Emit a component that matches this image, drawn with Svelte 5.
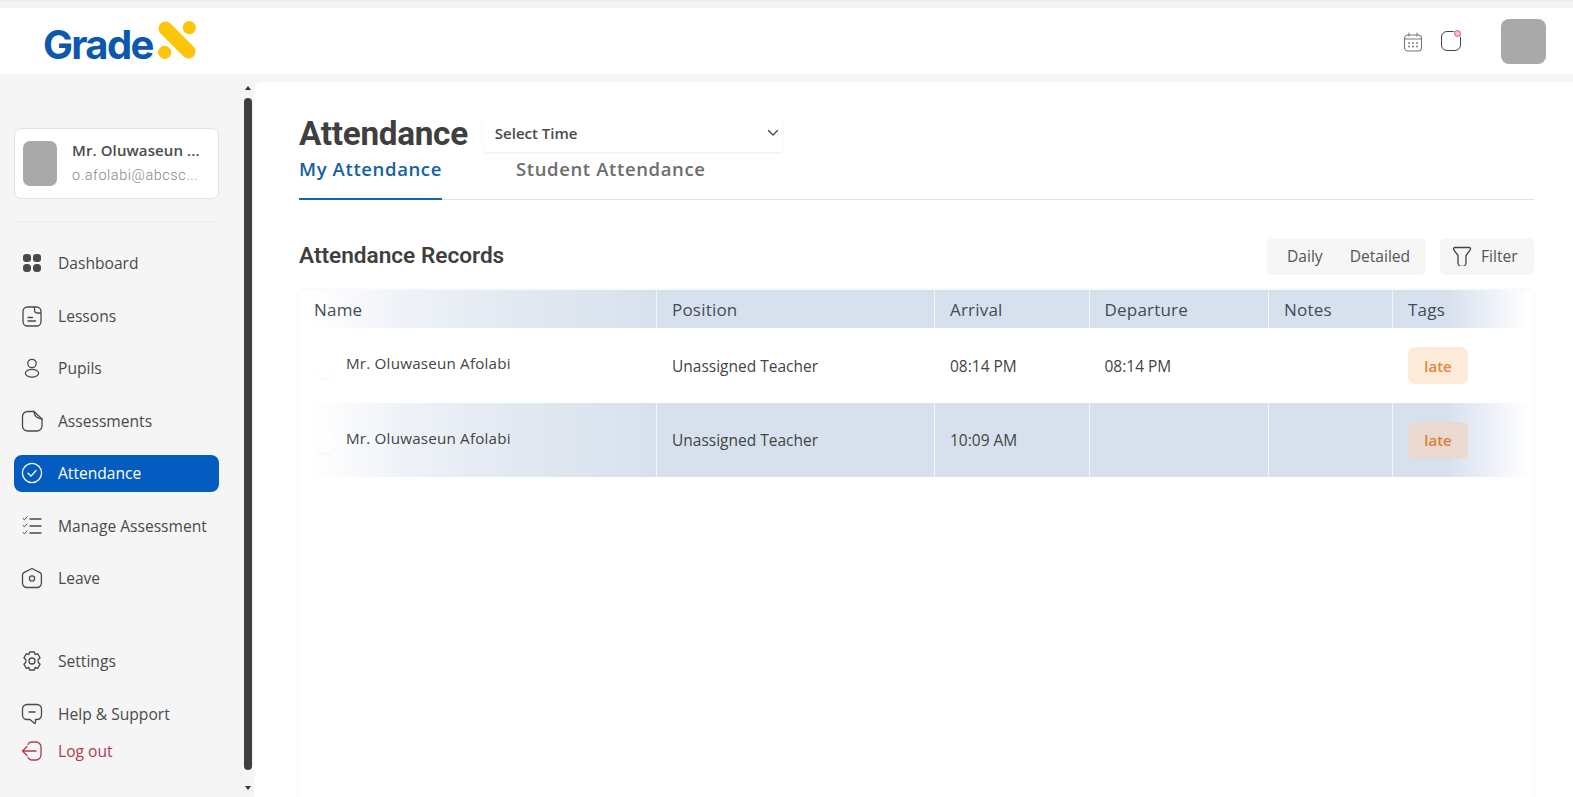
<script>
  const navTop = [
    { label: 'Dashboard', icon: 'dash' },
    { label: 'Lessons', icon: 'lessons' },
    { label: 'Pupils', icon: 'pupils' },
    { label: 'Assessments', icon: 'assess' },
    { label: 'Attendance', icon: 'check', active: true },
    { label: 'Manage Assessment', icon: 'manage' },
    { label: 'Leave', icon: 'leave' }
  ];
  const rows = [
    { arrival: '08:14 PM', departure: '08:14 PM', alt: false },
    { arrival: '10:09 AM', departure: '', alt: true }
  ];
</script>

{#snippet icon(name)}
  <svg class="ico" viewBox="0 0 22 22" fill="none" stroke="currentColor" stroke-width="1.3" stroke-linecap="round" stroke-linejoin="round">
    {#if name === 'dash'}
      <rect x="2" y="2" width="8" height="8" rx="3" fill="currentColor" stroke="none" />
      <rect x="12" y="2" width="8" height="8" rx="3" fill="currentColor" stroke="none" />
      <rect x="2" y="12" width="8" height="8" rx="3.5" fill="currentColor" stroke="none" />
      <rect x="12" y="12" width="8" height="8" rx="3.5" fill="currentColor" stroke="none" />
    {:else if name === 'lessons'}
      <rect x="2" y="2" width="18" height="19" rx="4.5" />
      <path d="M13.500 2.500v2.500a3 3 0 0 0 3 3h3M7 12.500h4.500M7 16h7.500" />
    {:else if name === 'pupils'}
      <circle cx="11" cy="6.5" r="4.2" />
      <ellipse cx="11" cy="16.3" rx="6.6" ry="3.9" />
    {:else if name === 'assess'}
      <path d="M13 1.5H6.5a5 5 0 0 0-5 5V16a5 5 0 0 0 5 5H16a5 5 0 0 0 5-5V9z" />
      <path d="M13 1.5c.2 4 3 7 8 7.5" />
    {:else if name === 'check'}
      <circle cx="11" cy="11" r="9.6" />
      <path d="M7 11.3l3 2.8 5-5.6" />
    {:else if name === 'manage'}
      <path d="M9 4h11M9 11h11M9 18h11" />
      <path d="M2 3.5l1.4 1.3L6 2M2 10.5l1.4 1.3L6 9M2 17.5l1.4 1.3L6 16" stroke-width="1" />
    {:else if name === 'leave'}
      <path d="M11 1.5l8 4.2a2.5 2.5 0 0 1 1.4 2.2V16a4.5 4.5 0 0 1-4.5 4.5H6A4.5 4.5 0 0 1 1.5 16V7.9a2.5 2.5 0 0 1 1.4-2.2z" />
      <circle cx="11" cy="11.5" r="2.6" />
    {:else if name === 'settings'}
      <path d="M8.6 2h4.8l.7 2.6 2.5-.9 2.5 4.1-2 1.9v2.6l2 1.9-2.5 4.1-2.5-.9-.7 2.6H8.6l-.7-2.6-2.5.9-2.5-4.1 2-1.9V9.7l-2-1.9 2.5-4.1 2.5.9z" />
      <circle cx="11" cy="11" r="3" />
    {:else if name === 'help'}
      <path d="M6 1.5h10a4.5 4.5 0 0 1 4.5 4.5v6a4.5 4.5 0 0 1-4.5 4.5h-1.5v3.2c0 .7-.6.9-1.2.5L9 16.5H6A4.5 4.5 0 0 1 1.5 12V6A4.5 4.5 0 0 1 6 1.5z" />
      <path d="M8 9h6" />
    {:else if name === 'logout'}
      <path d="M7 4.5A4 4 0 0 1 10.5 2H15a5 5 0 0 1 5 5v8a5 5 0 0 1-5 5h-4.500A4 4 0 0 1 7 17.500" />
      <path d="M15 11H2M6 6.500L1.500 11 6 15.500" />
    {/if}
  </svg>
{/snippet}

<div class="strip"></div>
<header class="topbar">
  <div class="logo">
    <span class="logo-text">Grade</span>
    <svg class="logo-x" viewBox="0 0 38 38" aria-hidden="true">
      <path d="M7.500 7.500L30.500 30.500" stroke="#fcc50b" stroke-width="14" stroke-linecap="round" />
      <circle cx="31.300" cy="6.700" r="6.600" fill="#fcc50b" />
      <circle cx="6.700" cy="31.300" r="6.600" fill="#fcc50b" />
    </svg>
  </div>
  <div class="top-actions">
    <svg class="cal" viewBox="0 0 20 20" fill="none" stroke="#777" stroke-width="1.100" stroke-linecap="round">
      <rect x="1.500" y="3" width="17" height="16" rx="3.500" />
      <path d="M1.500 7h17M6 1v3M14 1v3" />
      <path d="M6 11h.01M10 11h.01M14 11h.01M6 14.500h.01M10 14.500h.01M14 14.500h.01" stroke-width="1.800" />
    </svg>
    <div class="bell"><span class="dot"></span></div>
    <div class="avatar"></div>
  </div>
</header>

<div class="shell">
  <aside class="sidebar">
    <div class="user-card">
      <div class="user-pic"></div>
      <div class="user-text">
        <div class="user-name">Mr. Oluwaseun ...</div>
        <div class="user-mail">o.afolabi@abcsc...</div>
      </div>
    </div>
    <div class="side-rule"></div>
    <nav class="nav">
      {#each navTop as item}
        <div class="nav-item" class:active={item.active}>
          {@render icon(item.icon)}
          <span>{item.label}</span>
        </div>
      {/each}
    </nav>
    <div class="nav bottom">
      <div class="nav-item">{@render icon('settings')}<span>Settings</span></div>
      <div class="nav-item">{@render icon('help')}<span>Help &amp; Support</span></div>
      <div class="nav-item logout">{@render icon('logout')}<span>Log out</span></div>
    </div>
  </aside>

  <div class="scroll">
    <span class="arrow up"></span>
    <span class="thumb"></span>
    <span class="arrow down"></span>
  </div>

  <main class="main">
    <div class="title-row">
      <h1>Attendance</h1>
      <div class="select">
        <span>Select Time</span>
        <svg viewBox="0 0 12 8" fill="none" stroke="#444" stroke-width="1.300" stroke-linecap="round" stroke-linejoin="round"><path d="M1.500 1.500L6 6l4.500-4.500" /></svg>
      </div>
    </div>
    <div class="tabs">
      <div class="tab on">My Attendance</div>
      <div class="tab">Student Attendance</div>
    </div>

    <div class="records-head">
      <h2>Attendance Records</h2>
      <div class="records-tools">
        <div class="seg"><span>Daily</span><span>Detailed</span></div>
        <div class="filter">
          <svg viewBox="0 0 20 20" fill="none" stroke="#444" stroke-width="1.300" stroke-linejoin="round">
            <path d="M3 1.500h14a1.500 1.500 0 0 1 1.200 2.400L14 9.500v7a4 4 0 0 1-8 0v-7L1.800 3.900A1.500 1.500 0 0 1 3 1.500z" />
          </svg>
          <span>Filter</span>
        </div>
      </div>
    </div>

    <div class="table">
      <div class="tr head">
        <div class="td first">Name</div>
        <div class="td">Position</div>
        <div class="td">Arrival</div>
        <div class="td">Departure</div>
        <div class="td">Notes</div>
        <div class="td last">Tags</div>
      </div>
      {#each rows as r}
        <div class="tr body" class:alt={r.alt}>
          <div class="td first name"><span class="ghost"></span><span class="who">Mr. Oluwaseun Afolabi</span></div>
          <div class="td">Unassigned Teacher</div>
          <div class="td">{r.arrival}</div>
          <div class="td">{r.departure}</div>
          <div class="td"></div>
          <div class="td last"><span class="late">late</span></div>
        </div>
      {/each}
    </div>
  </main>
</div>

<style>
  :global(body) {
    margin: 0;
    height: 797px;
    overflow: hidden;
    background: #f5f5f6;
    font-family: "Open Sans", sans-serif;
    color: #444;
  }
  .strip { height: 8px; background: linear-gradient(#ececec 0, #ececec 1px, #f7f3f4 2px); }
  .topbar {
    height: 66px; background: #fff; display: flex; align-items: center;
    justify-content: space-between; padding: 0 27px 0 43px; box-sizing: border-box;
  }
  .logo { display: flex; align-items: center; gap: 5px; margin-top: -1px; }
  .logo-text {
    font-family: Inter, sans-serif; font-weight: 700; font-size: 40px;
    letter-spacing: -1.700px; color: #0b58ad; line-height: 44px; margin-top: 8px;
  }
  .logo-x { width: 38px; height: 38px; margin-top: -2px; }
  .top-actions { display: flex; align-items: center; }
  .cal { width: 20px; height: 20px; margin-top: 1px; }
  .bell {
    width: 20px; height: 20px; border: 1.500px solid #444; border-radius: 6px;
    margin-left: 18px; position: relative; box-sizing: border-box;
  }
  .dot {
    position: absolute; top: -2px; right: -1px; width: 7px; height: 7px; box-sizing: border-box;
    border-radius: 50%; background: #f7c4cc; border: 1.500px solid #c43a55; outline: 1px solid #fff;
  }
  .avatar { width: 45px; height: 45px; background: #a9a9a9; border-radius: 8px; margin-left: 40px; }

  .shell { display: flex; height: 723px; padding-top: 8px; box-sizing: border-box; }
  .sidebar { width: 243px; flex: none; padding: 46px 0 0 14px; box-sizing: border-box; display: flex; flex-direction: column; }
  .user-card {
    width: 205px; height: 71px; box-sizing: border-box; background: #fff; border: 1px solid #e2e2e2;
    border-radius: 7px; display: flex; align-items: center; padding: 0 8px; gap: 15px;
  }
  .user-pic { width: 34px; height: 45px; background: #a9a9a9; border-radius: 7px; flex: none; }
  .user-name { font-size: 15px; font-weight: 600; color: #4a4a4a; line-height: 20px; white-space: nowrap; margin-top: -2px; letter-spacing: .1px; }
  .user-mail { font-family: Roboto, sans-serif; font-size: 14.500px; font-weight: 300; color: #888; line-height: 20px; margin-top: 6px; white-space: nowrap; letter-spacing: .55px; }
  .side-rule { width: 205px; height: 1px; background: #ececec; margin: 22px 0 22.500px; }
  .nav { display: flex; flex-direction: column; gap: 15.500px; width: 205px; }
  .bottom { margin-top: 46px; }
  .nav-item {
    height: 37px; display: flex; align-items: center; gap: 15px; padding-left: 7px;
    border-radius: 8px; font-size: 15.600px; color: #4a4a4a; box-sizing: border-box;
  }
  .nav-item.active { background: #045cc0; color: #fff; }
  .logout { color: #b23a4c; margin-top: -15.500px; }
  .ico { width: 22px; height: 22px; flex: none; }

  .scroll { width: 11px; padding-right: 1px; box-sizing: border-box; flex: none; display: flex; flex-direction: column; align-items: center; }
  .thumb { width: 8px; height: 672px; background: #3f3f3f; border-radius: 4px; margin-top: 8px; flex: none; }
  .arrow { width: 0; height: 0; border-left: 3.500px solid transparent; border-right: 3.500px solid transparent; flex: none; }
  .up { border-bottom: 4px solid #333; margin-top: 4px; }
  .down { border-top: 4px solid #333; margin-top: 16px; }

  .main {
    flex: 1; background: #fff; border-top-left-radius: 8px;
    padding: 33px 39px 0 45px; box-sizing: border-box; min-width: 0;
  }
  .title-row { display: flex; align-items: center; gap: 15px; height: 37px; }
  h1 { margin: 0; font-family: Roboto, sans-serif; font-weight: 700; font-size: 33.300px; line-height: 37px; color: #3f3f3f; letter-spacing: -.3px; }
  .select {
    width: 300px; height: 37px; box-sizing: border-box; display: flex; align-items: center;
    justify-content: space-between; padding: 0 4px 2px 12px; border-radius: 4px;
    box-shadow: 0 1px 2px rgba(0,0,0,.08); font-size: 15px; font-weight: 600; color: #4a4a4a;
  }
  .select svg { width: 12px; height: 8px; }
  .tabs { display: flex; gap: 74px; border-bottom: 1px solid #e2e2e2; height: 48px; box-sizing: border-box; }
  .tab { font-size: 18.500px; font-weight: 600; color: #6e6e6e; line-height: 34px; letter-spacing: .62px; height: 48px; box-sizing: border-box; }
  .tab.on { color: #1560a5; border-bottom: 2px solid #1566a8; }

  .records-head { display: flex; justify-content: space-between; align-items: center; margin-top: 38px; height: 37px; }
  h2 { margin: 0 0 2px; font-family: Roboto, sans-serif; font-size: 22.600px; font-weight: 600; color: #3f3f3f; }
  .records-tools { display: flex; gap: 14px; font-size: 15.600px; color: #555; }
  .seg { display: flex; gap: 27px; background: #f6f6f7; border-radius: 6px; height: 37px; align-items: center; padding: 0 16px 2px 20px; box-sizing: border-box; width: 159px; }
  .filter { display: flex; align-items: center; gap: 9px; background: #f6f6f7; border-radius: 6px; height: 37px; padding: 0 12px 2px 12px; box-sizing: border-box; width: 94px; }
  .filter svg { width: 20px; height: 20px; flex: none; }

  .table { margin-top: 15px; height: 510px; width: 1234px; box-shadow: 0 0 5px rgba(0,0,0,.06); }
  .tr { display: grid; grid-template-columns: 358px 278px 154.500px 179.500px 124px 140px; align-items: stretch; }
  .td { display: flex; align-items: center; padding-left: 15px; box-sizing: border-box; font-size: 15.500px; color: #444; white-space: nowrap; border-right: 1px solid transparent; }
  .head { height: 38px; }
  .head .td { background: #d7e1ed; font-size: 17px; color: #444b58; border-right-color: #f2f5f9; letter-spacing: .2px; }
  .body { height: 75px; }
  .body:last-child { height: 74px; }
  .alt .td { background: #d7e1ed; border-right-color: #f2f5f9; }
  .head .first, .alt .first { background: linear-gradient(90deg, #fff 3%, #eef2f8 30%, #e3e9f2 60%, #d7e1ed 100%); }
  .head .last, .alt .last { background: linear-gradient(90deg, #d7e1ed 39%, #e9eef6 65%, #fff 97%); border-right: none; }
  .name { align-items: flex-start; padding-top: 25px; }
  .ghost { width: 22px; height: 22px; border-radius: 50%; background: rgba(255,255,255,.5); box-shadow: 0 2px 2px rgba(0,0,0,.025); margin: 3px 10px 0 0; flex: none; }
  .who { line-height: 20px; font-size: 15.200px; letter-spacing: .2px; }
  .late {
    width: 60px; height: 37px; display: flex; align-items: center; justify-content: center;
    background: #fdebda; color: #e5853a; border-radius: 7px; font-weight: 600; font-size: 15px;
  }
  .alt .late { background: #ead9d0; color: #db7f3a; }
</style>
